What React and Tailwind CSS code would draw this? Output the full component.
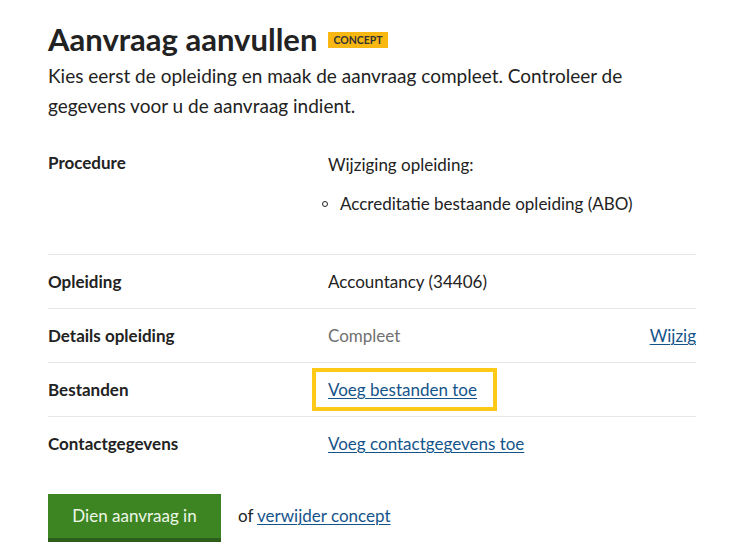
const linkCls = 'text-[#15548a] underline underline-offset-2 decoration-1';

const rows = [
  { label: 'Opleiding', value: <span>Accountancy (34406)</span> },
  { label: 'Details opleiding', value: <span className="text-[#707070]">Compleet</span>, action: 'Wijzig' },
  {
    label: 'Bestanden',
    value: (
      <span className="-ml-4 -my-[9px] inline-block border-4 border-[#ffc917] py-[5px] pl-3 pr-4">
        <a href="#" className={linkCls}>Voeg bestanden toe</a>
      </span>
    ),
  },
  {
    label: 'Contactgegevens',
    value: <a href="#" className={linkCls}>Voeg contactgegevens toe</a>,
  },
];

export default function App() {
  return (
    <div className="min-h-[559px] bg-white pl-12 pr-[38px] pt-[19px] text-[#222] font-['Lato','Liberation_Sans',sans-serif]">
      <div className="flex items-center gap-[11px]">
        <h1 className="text-[31px] font-bold leading-[40px] text-[#222]">Aanvraag aanvullen</h1>
        <span className="mt-[1px] bg-[#f8b811] px-[5px] py-[1px] text-[10.5px] font-bold leading-[14px] text-[#333]">CONCEPT</span>
      </div>
      <p className="mt-[2px] max-w-[640px] text-[19px] leading-[30px] text-[#222]">
        Kies eerst de opleiding en maak de aanvraag compleet. Controleer de gegevens voor u de aanvraag indient.
      </p>

      <dl className="mt-[23px] text-[17px]">
        <div className="flex border-b border-[#e6e6e6] pt-[6px] pb-[37px]">
          <dt className="w-[280px] font-bold leading-[26px]">Procedure</dt>
          <dd className="flex-1">
            <p className="mt-[2px] leading-[26px]">Wijziging opleiding:</p>
            <ul className="mt-[13px] leading-[26px]">
              <li className="-ml-[6px] flex items-center gap-[12px]">
                <span className="h-[6px] w-[6px] rounded-full border border-[#222]" />
                Accreditatie bestaande opleiding (ABO)
              </li>
            </ul>
          </dd>
        </div>
        {rows.map((r) => (
          <div key={r.label} className="flex items-center border-b border-[#e6e6e6] py-[14px] last:border-b-0">
            <dt className="w-[280px] font-bold leading-[25px]">{r.label}</dt>
            <dd className="flex-1 leading-[25px]">{r.value}</dd>
            {r.action && (
              <a href="#" className={`leading-[25px] ${linkCls}`}>{r.action}</a>
            )}
          </div>
        ))}
      </dl>

      <div className="mt-[24px] flex items-center gap-[17px]">
        <button className="h-[44px] w-[173px] bg-[#3d8523] text-[17px] text-[#eef7e8] shadow-[0_4px_0_#2c5f1a]">
          Dien aanvraag in
        </button>
        <p className="text-[17px]">
          of <a href="#" className={linkCls}>verwijder concept</a>
        </p>
      </div>
    </div>
  );
}
